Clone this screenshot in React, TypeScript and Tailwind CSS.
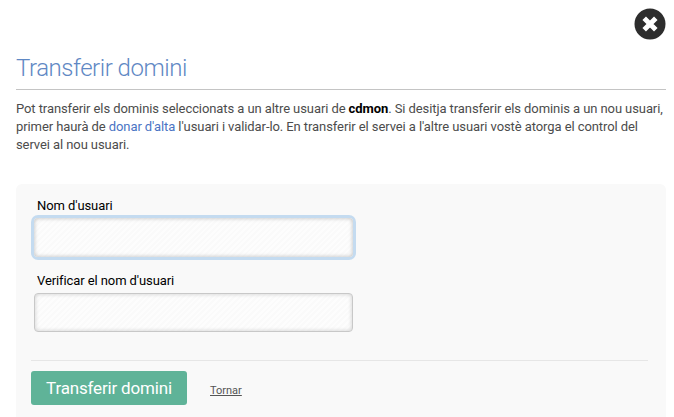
import React from 'react';

const CloseIcon = () => (
  <svg width="32" height="32" viewBox="0 0 32 32" aria-hidden="true">
    <circle cx="16" cy="16" r="15.5" fill="#2d2d2d" />
    <path d="M10.2 10.2 21.8 21.8 M21.8 10.2 10.2 21.8" stroke="#fff" strokeWidth="5" />
  </svg>
);

const stripes =
  'bg-[repeating-linear-gradient(135deg,#fdfdfd_0px,#fdfdfd_2px,#fafafa_2px,#fafafa_4px)]';

const App = () => {
  return (
    <div className="h-[417px] w-[674px] overflow-hidden bg-white pl-4 pr-2 font-['Roboto',sans-serif] text-[13px] text-[#4c4c4c]">
      <div className="flex h-10 items-end justify-end">
        <button type="button" aria-label="Tancar">
          <CloseIcon />
        </button>
      </div>

      <h1 className="h-[50px] border-b border-[#c4c4c4] pt-3 text-[24px] font-light leading-8 tracking-[-0.47px] text-[#5f88c4]">
        Transferir domini
      </h1>

      <p className="mt-[10px] whitespace-nowrap leading-[18px] tracking-[-0.085px]">
        Pot transferir els dominis seleccionats a un altre usuari de{' '}
        <strong className="font-bold text-black">cdmon</strong>. Si desitja transferir els dominis a un nou usuari,
        <br />
        primer haurà de <a href="#" className="text-[#4a74c4]">donar d'alta</a> l'usuari i validar-lo. En transferir
        el servei a l'altre usuari vostè atorga el control del
        <br />
        servei al nou usuari.
      </p>

      {/* Form */}
      <form className="mt-[30px] flex h-[260px] flex-col rounded-md bg-[#f9f9f9] pl-[15px] pr-[18px] pt-[13px] text-black">
        <label htmlFor="user" className="ml-1.5 leading-[18px] tracking-[-0.09px]">
          Nom d'usuari
        </label>
        <input
          id="user"
          className={`ml-[3px] mt-[3px] h-[39px] w-[319px] rounded-[4px] px-3 shadow-[0_0_0_3px_#c4dbf0,inset_0_0_4px_#b8b8b8] outline-none ${stripes}`}
        />

        <label htmlFor="verify" className="ml-1.5 mt-[15px] leading-[18px] tracking-[-0.09px]">
          Verificar el nom d'usuari
        </label>
        <input
          id="verify"
          className={`ml-[3px] mt-[3px] h-[39px] w-[319px] rounded-[4px] border border-[#c8c8c8] px-3 shadow-[inset_0_0_4px_#cccccc] outline-none ${stripes}`}
        />

        {/* Actions */}
        <div className="mt-7 flex items-start border-t border-[#e6e6e6] pt-2.5">
          <button
            type="button"
            className="h-[34px] w-[156px] rounded-[3px] bg-[#5fb398] pt-0.5 text-[17px] tracking-[-0.17px] text-white"
          >
            Transferir domini
          </button>
          <a href="#" className="ml-[23px] mt-3 text-[11px] leading-4 text-[#555] underline">
            Tornar
          </a>
        </div>
      </form>
    </div>
  );
};

export default App;
